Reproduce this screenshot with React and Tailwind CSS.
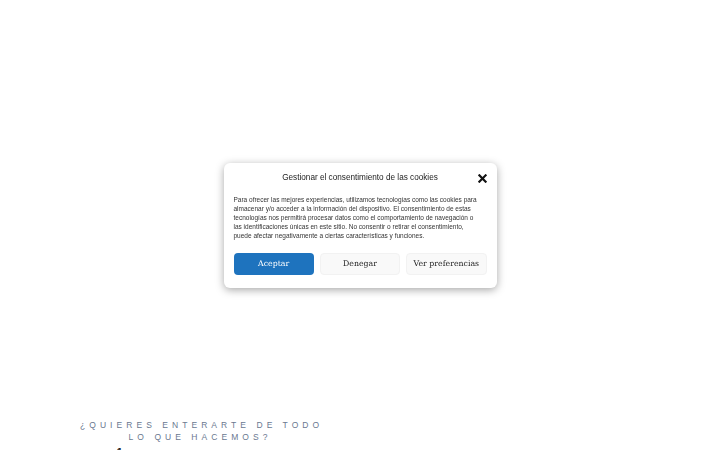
import React from 'react';

export default function App() {
  return (
    <div className="relative min-h-screen bg-white overflow-hidden font-['Inter',sans-serif]">
      <div className="pt-[419px] pl-[80px]">
        <div className="w-[240px] text-center text-[8.5px] leading-[12px] tracking-[4.05px] text-[#6a7890] font-['Liberation_Sans',sans-serif] whitespace-nowrap">
          <p>¿QUIERES ENTERARTE DE TODO</p>
          <p>LO QUE HACEMOS?</p>
        </div>
        <div className="ml-[37px] mt-[4px] text-[10px] leading-[10px] font-bold text-[#222]">1</div>
      </div>

      <div className="fixed inset-0 flex items-center justify-center">
        <div className="w-[273px] bg-white rounded-[6px] shadow-[0_2px_8px_rgba(0,0,0,0.35)] px-[10px] pt-[10px] pb-[13px]">
          <div className="relative flex items-center justify-center h-[12px]">
            <h2 className="text-[8.2px] font-medium text-[#222] font-['Liberation_Sans',sans-serif]">
              Gestionar el consentimiento de las cookies
            </h2>
            <button className="absolute right-[0px] top-[1px] text-[#111]">
              <svg width="9" height="9" viewBox="0 0 10 10">
                <path d="M1.5 1.5 L8.5 8.5 M8.5 1.5 L1.5 8.5" stroke="currentColor" strokeWidth="2.4" strokeLinecap="square" />
              </svg>
            </button>
          </div>
          <p className="mt-[10px] pr-[9px] text-[6.5px] leading-[9px] text-[#333] font-['Liberation_Sans',sans-serif]">
            Para ofrecer las mejores experiencias, utilizamos tecnologías como las cookies para almacenar y/o acceder a la información del dispositivo. El consentimiento de estas tecnologías nos permitirá procesar datos como el comportamiento de navegación o las identificaciones únicas en este sitio. No consentir o retirar el consentimiento, puede afectar negativamente a ciertas características y funciones.
          </p>
          <div className="mt-[13px] grid grid-cols-3 gap-[6px] font-['DejaVu_Serif',serif] text-[7.8px]">
            <button className="h-[22px] rounded-[4px] bg-[#1e73be] text-white">Aceptar</button>
            <button className="h-[22px] rounded-[4px] bg-[#f9f9f9] border border-[#f2f2f2] text-[#222]">Denegar</button>
            <button className="h-[22px] rounded-[4px] bg-[#f9f9f9] border border-[#f2f2f2] text-[#222]">Ver preferencias</button>
          </div>
        </div>
      </div>
    </div>
  );
}
